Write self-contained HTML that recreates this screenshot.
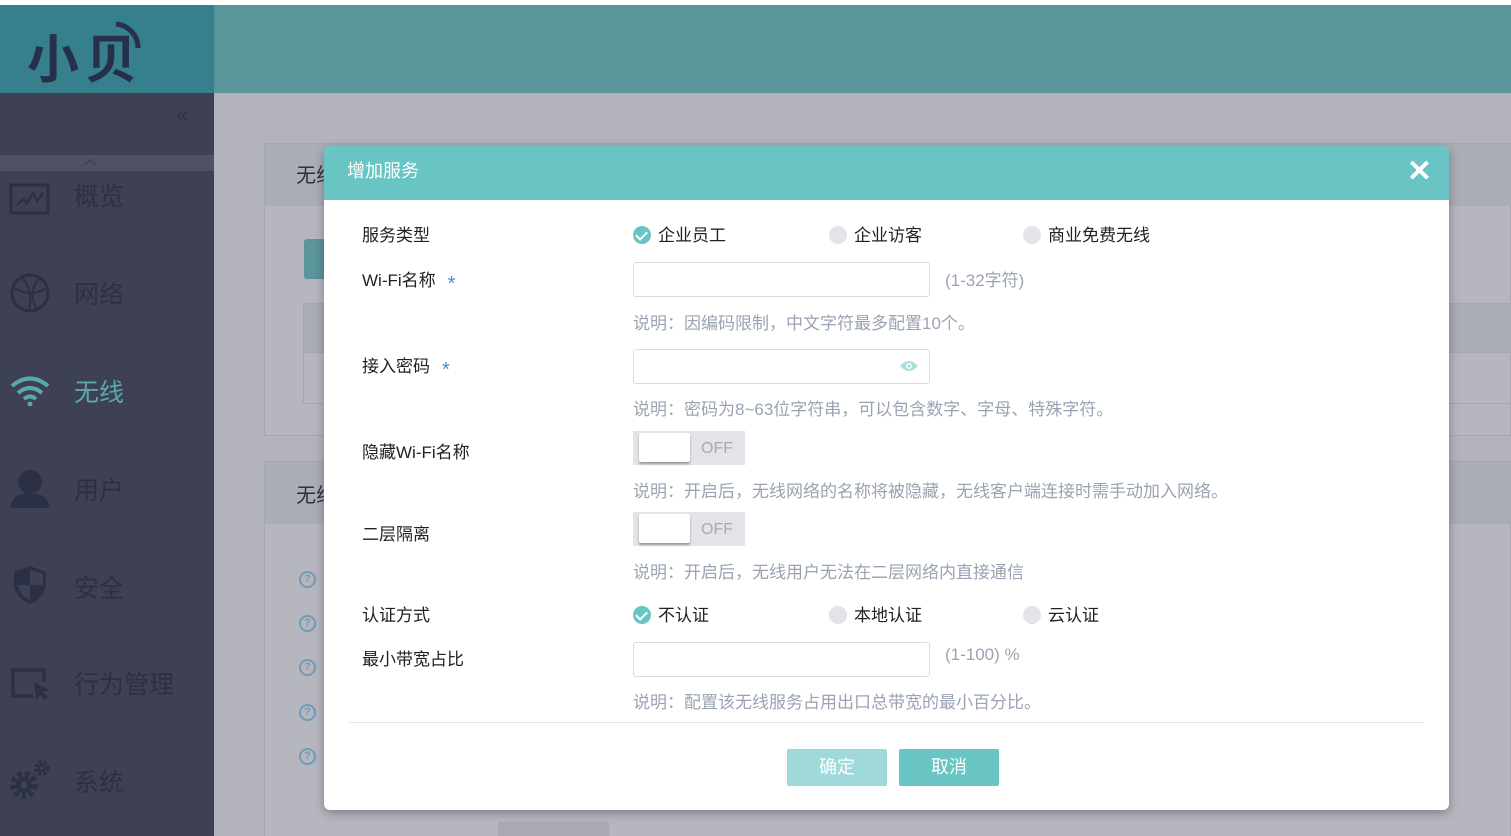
<!DOCTYPE html>
<html style="overflow:hidden"><head><meta charset="utf-8">
<style>
*{margin:0;padding:0;box-sizing:border-box}
html,body{width:1511px;height:836px;overflow:hidden}
body{background:#fff;font-family:"Liberation Sans","Noto Sans CJK SC",sans-serif;position:relative}
.a{position:absolute}
.side{left:0;top:93px;width:214px;height:743px;background:#3e4154}
.mi{position:absolute;left:74px;font-size:25px;color:#2c3044}
.lab{position:absolute;left:362px;font-size:17px;color:#222}
.star{color:#3c8fd6;font-size:20px;margin-left:12px;vertical-align:-4px}
.inp{position:absolute;left:633px;width:297px;height:35px;border:1px solid #dcdcdc;border-radius:3px;background:#fff}
.note{position:absolute;left:633px;font-size:17px;color:#9aa3b3}
.rad{position:absolute;font-size:17px;color:#222}
.rad i{display:inline-block;width:18px;height:18px;border-radius:50%;background:#e3e4e8;vertical-align:-3px;margin-right:7px;position:relative}
.rad i.on{background:#69c4c4}
.rad i.on:after{content:"";position:absolute;left:5px;top:3px;width:5px;height:9px;border:solid #fff;border-width:0 2px 2px 0;transform:rotate(45deg)}
.tg{position:absolute;left:633px;width:112px;height:34px;background:#e3e4e8}
.tg b{position:absolute;left:6px;top:2px;width:51px;height:29px;background:#fff;box-shadow:0 2px 2px #999;border-radius:2px}
.tg span{position:absolute;left:68px;top:9px;font-size:16px;color:#aaa}
.q{position:absolute;left:299px;width:17px;height:17px;border:2px solid #6f9cb8;border-radius:50%;font-size:11px;color:#6f9cb8;text-align:center;line-height:13px;font-weight:bold}
</style></head><body>
<div class="a" style="left:0;top:5px;width:214px;height:88px;background:#367f8c"></div>
<div class="a" style="left:214px;top:5px;width:1297px;height:88px;background:#5a959c"></div>
<div class="a" style="left:27px;top:18px;font-size:52px;font-weight:bold;color:#27304a;letter-spacing:6px">小贝</div>
<svg class="a" style="left:108px;top:20px" width="34" height="40"><path d="M8 4 A24 24 0 0 1 30 28" stroke="#27304a" stroke-width="5" fill="none"/></svg>
<div class="a side"></div>
<div class="a" style="left:176px;top:102px;font-size:22px;color:#2c3044">«</div>
<div class="a" style="left:0;top:155px;width:214px;height:16px;background:#4f5263"></div>
<svg class="a" style="left:83px;top:158px" width="14" height="8"><path d="M1 7 L7 2 L13 7" stroke="#3e4154" stroke-width="1.5" fill="none"/></svg>
<svg class="a" style="left:9px;top:183px" width="42" height="32"><rect x="2" y="2" width="37" height="28" fill="none" stroke="#2c3044" stroke-width="3"/><path d="M8 22 L14 16 L18 20 L24 10 L28 18 L34 10" stroke="#2c3044" stroke-width="2.5" fill="none"/></svg>
<div class="mi" style="top:177px">概览</div>
<svg class="a" style="left:9px;top:272px" width="42" height="42"><circle cx="21" cy="21" r="18" fill="none" stroke="#2c3044" stroke-width="3"/><path d="M5 16 Q21 26 37 16 M13 5 Q25 20 20 38 M30 6 Q18 22 28 37" stroke="#2c3044" stroke-width="2" fill="none"/></svg>
<div class="mi" style="top:275px">网络</div>
<svg class="a" style="left:9px;top:374px" width="42" height="32"><path d="M3 12 Q21 -3 39 12" stroke="#5aa9aa" stroke-width="4" fill="none"/><path d="M9 19 Q21 9 33 19" stroke="#5aa9aa" stroke-width="4" fill="none"/><path d="M15 25 Q21 20 27 25" stroke="#5aa9aa" stroke-width="4" fill="none"/><circle cx="21" cy="30" r="2.5" fill="#5aa9aa"/></svg>
<div class="mi" style="top:373px;color:#5aa9aa">无线</div>
<svg class="a" style="left:9px;top:470px" width="42" height="38"><circle cx="21" cy="12" r="12" fill="#2c3044"/><path d="M1 38 Q4 22 21 24 Q38 22 41 38Z" fill="#2c3044"/></svg>
<div class="mi" style="top:471px">用户</div>
<svg class="a" style="left:12px;top:564px" width="36" height="42"><path d="M18 2 L34 8 L34 22 Q32 34 18 40 Q4 34 2 22 L2 8Z" fill="#2c3044"/><path d="M18 6 L18 21 L31 21 L31 10Z M18 21 L6 21 Q8 32 18 36Z" fill="#3e4154"/></svg>
<div class="mi" style="top:569px">安全</div>
<svg class="a" style="left:9px;top:666px" width="42" height="36"><path d="M24 30 L4 30 L4 4 L35 4 L35 16" stroke="#2c3044" stroke-width="3.5" fill="none"/><path d="M25 16 L40 24 L34 26 L39 32 L36 34 L31 29 L27 34Z" fill="#2c3044"/></svg>
<div class="mi" style="top:665px">行为管理</div>
<svg class="a" style="left:8px;top:758px" width="44" height="44"><circle cx="16" cy="27" r="11" fill="none" stroke="#2c3044" stroke-width="6" stroke-dasharray="4.5 3"/><circle cx="16" cy="27" r="8" fill="#2c3044"/><circle cx="16" cy="27" r="3.5" fill="#3e4154"/><circle cx="34" cy="10" r="6" fill="none" stroke="#2c3044" stroke-width="4" stroke-dasharray="3 2"/><circle cx="34" cy="10" r="4" fill="#2c3044"/><circle cx="34" cy="10" r="1.8" fill="#3e4154"/></svg>
<div class="mi" style="top:763px">系统</div>
<div class="a" style="left:214px;top:93px;width:1297px;height:743px;background:#b3b3bc"></div>
<div class="a" style="left:264px;top:143px;width:1247px;height:293px;background:#b6b6bf;border:1px solid #a6a7b0"></div>
<div class="a" style="left:265px;top:144px;width:1246px;height:62px;background:#abadb6"></div>
<div class="a" style="left:296px;top:159px;font-size:20px;color:#2c3044">无线</div>
<div class="a" style="left:304px;top:239px;width:30px;height:40px;background:#5a959c;border-radius:3px"></div>
<div class="a" style="left:303px;top:303px;width:1208px;height:101px;border:1px solid #a6a7b0;background:#b6b6bf"></div>
<div class="a" style="left:304px;top:304px;width:1207px;height:49px;background:#abadb6;border-bottom:1px solid #a6a7b0"></div>
<div class="a" style="left:264px;top:461px;width:1247px;height:375px;background:#b6b6bf;border:1px solid #a6a7b0;border-bottom:none"></div>
<div class="a" style="left:265px;top:462px;width:1246px;height:62px;background:#abadb6"></div>
<div class="a" style="left:296px;top:479px;font-size:20px;color:#2c3044">无线</div>
<div class="q" style="top:571px">?</div><div class="q" style="top:615px">?</div><div class="q" style="top:659px">?</div><div class="q" style="top:704px">?</div><div class="q" style="top:748px">?</div>
<div class="a" style="left:498px;top:822px;width:111px;height:14px;background:#a8a9b2"></div>
<div class="a" style="left:324px;top:146px;width:1125px;height:664px;background:#fff;border-radius:6px;box-shadow:0 3px 10px rgba(0,0,0,.3);overflow:hidden">
 <div style="height:54px;background:#69c4c4;color:#fff;font-size:18px;padding:11px 0 0 23px">增加服务</div>
 <div class="a" style="right:17px;top:8px;color:#fff;font-size:30px;font-weight:bold">✕</div>
 <div class="a" style="left:25px;top:576px;width:1075px;height:1px;background:#e5e5e5"></div>
 <div class="a" style="left:463px;top:603px;width:100px;height:37px;background:#9fd9d9;border-radius:2px;color:#fff;font-size:18px;text-align:center;line-height:36px">确定</div>
 <div class="a" style="left:575px;top:603px;width:100px;height:37px;background:#69c4c4;border-radius:2px;color:#fff;font-size:18px;text-align:center;line-height:36px">取消</div>
</div>
<div class="lab" style="top:221px">服务类型</div>
<div class="rad" style="left:633px;top:221px"><i class="on"></i>企业员工</div>
<div class="rad" style="left:829px;top:221px"><i></i>企业访客</div>
<div class="rad" style="left:1023px;top:221px"><i></i>商业免费无线</div>
<div class="lab" style="top:266px">Wi-Fi名称<span class="star">*</span></div>
<div class="inp" style="top:262px"></div>
<div class="note" style="left:945px;top:266px">(1-32字符)</div>
<div class="note" style="top:309px">说明：因编码限制，中文字符最多配置10个。</div>
<div class="lab" style="top:352px">接入密码<span class="star">*</span></div>
<div class="inp" style="top:349px"></div>
<svg class="a" style="left:899px;top:359px" width="20" height="14"><path d="M1 7 Q10 -3 19 7 Q10 17 1 7Z" fill="#a8dede"/><circle cx="10" cy="7" r="3" fill="#fff"/><circle cx="10" cy="7" r="1.6" fill="#a8dede"/></svg>
<div class="note" style="top:395px">说明：密码为8~63位字符串，可以包含数字、字母、特殊字符。</div>
<div class="lab" style="top:438px">隐藏Wi-Fi名称</div>
<div class="tg" style="top:431px"><b></b><span>OFF</span></div>
<div class="note" style="top:477px">说明：开启后，无线网络的名称将被隐藏，无线客户端连接时需手动加入网络。</div>
<div class="lab" style="top:520px">二层隔离</div>
<div class="tg" style="top:512px"><b></b><span>OFF</span></div>
<div class="note" style="top:558px">说明：开启后，无线用户无法在二层网络内直接通信</div>
<div class="lab" style="top:601px">认证方式</div>
<div class="rad" style="left:633px;top:601px"><i class="on"></i>不认证</div>
<div class="rad" style="left:829px;top:601px"><i></i>本地认证</div>
<div class="rad" style="left:1023px;top:601px"><i></i>云认证</div>
<div class="lab" style="top:645px">最小带宽占比</div>
<div class="inp" style="top:642px"></div>
<div class="note" style="left:945px;top:645px">(1-100) %</div>
<div class="note" style="top:688px">说明：配置该无线服务占用出口总带宽的最小百分比。</div>
</body></html>
